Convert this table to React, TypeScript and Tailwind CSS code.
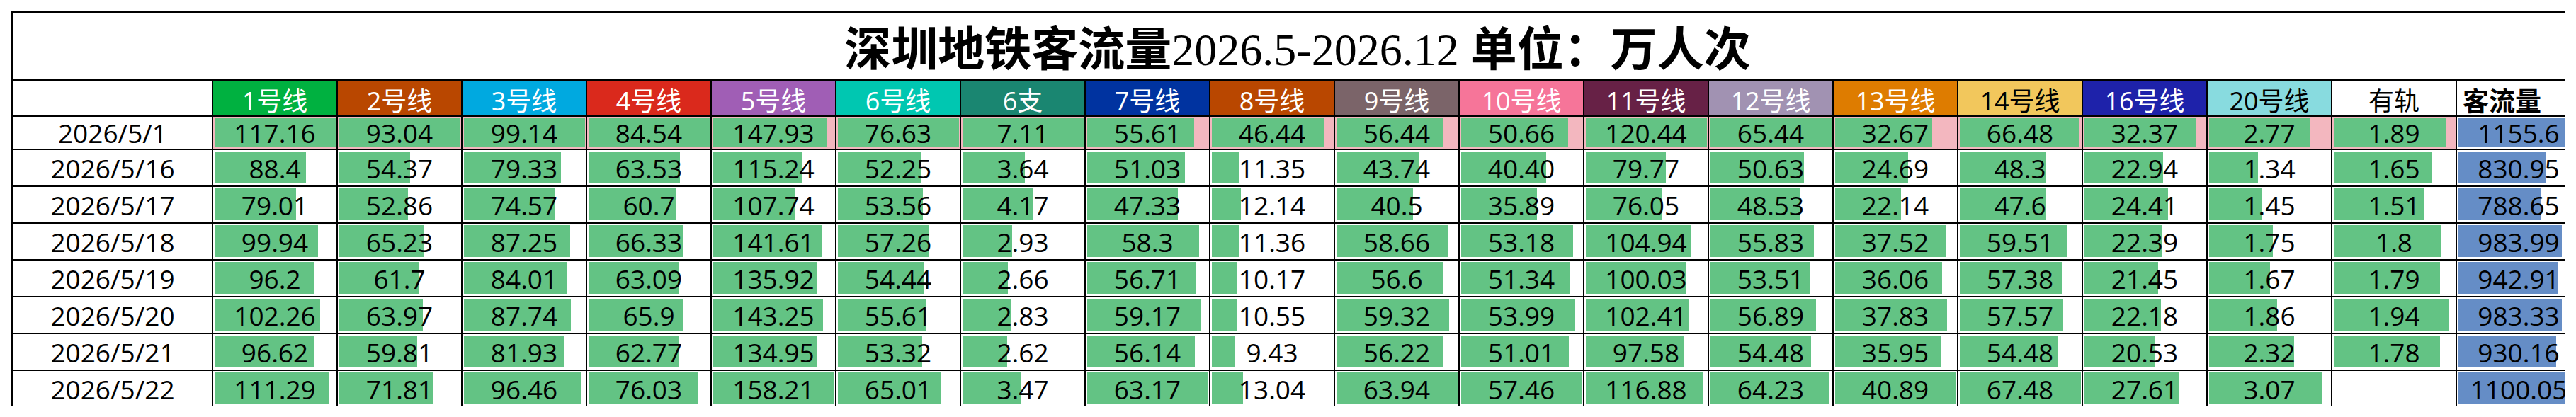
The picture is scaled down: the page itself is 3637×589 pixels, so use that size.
const lines = [
  { name: '1号线', head: 'bg-[#00b140] text-white', max: 117.16 },
  { name: '2号线', head: 'bg-[#b94700] text-white', max: 93.04 },
  { name: '3号线', head: 'bg-[#00a9e0] text-white', max: 99.14 },
  { name: '4号线', head: 'bg-[#da291c] text-white', max: 84.54 },
  { name: '5号线', head: 'bg-[#a05eb5] text-white', max: 158.21 },
  { name: '6号线', head: 'bg-[#00c7b1] text-white', max: 76.63 },
  { name: '6支', head: 'bg-[#1a8671] text-white', max: 7.11 },
  { name: '7号线', head: 'bg-[#0033a0] text-white', max: 63.17 },
  { name: '8号线', head: 'bg-[#b94700] text-white', max: 50.26 },
  { name: '9号线', head: 'bg-[#7b6469] text-white', max: 63.94 },
  { name: '10号线', head: 'bg-[#f67599] text-white', max: 57.46 },
  { name: '11号线', head: 'bg-[#672146] text-white', max: 120.44 },
  { name: '12号线', head: 'bg-[#a192b2] text-white', max: 65.44 },
  { name: '13号线', head: 'bg-[#de7c00] text-white', max: 40.89 },
  { name: '14号线', head: 'bg-[#f2c75c] text-black', max: 67.48 },
  { name: '16号线', head: 'bg-[#1e22aa] text-white', max: 35.26 },
  { name: '20号线', head: 'bg-[#88dbdf] text-black', max: 3.31 },
  { name: '有轨', head: 'bg-white text-black', max: 2.035 },
];

const rows = [
  { date: '2026/5/1', vals: ['117.16', '93.04', '99.14', '84.54', '147.93', '76.63', '7.11', '55.61', '46.44', '56.44', '50.66', '120.44', '65.44', '32.67', '66.48', '32.37', '2.77', '1.89'], total: '1155.6' },
  { date: '2026/5/16', vals: ['88.4', '54.37', '79.33', '63.53', '115.24', '52.25', '3.64', '51.03', '11.35', '43.74', '40.40', '79.77', '50.63', '24.69', '48.3', '22.94', '1.34', '1.65'], total: '830.95' },
  { date: '2026/5/17', vals: ['79.01', '52.86', '74.57', '60.7', '107.74', '53.56', '4.17', '47.33', '12.14', '40.5', '35.89', '76.05', '48.53', '22.14', '47.6', '24.41', '1.45', '1.51'], total: '788.65' },
  { date: '2026/5/18', vals: ['99.94', '65.23', '87.25', '66.33', '141.61', '57.26', '2.93', '58.3', '11.36', '58.66', '53.18', '104.94', '55.83', '37.52', '59.51', '22.39', '1.75', '1.8'], total: '983.99' },
  { date: '2026/5/19', vals: ['96.2', '61.7', '84.01', '63.09', '135.92', '54.44', '2.66', '56.71', '10.17', '56.6', '51.34', '100.03', '53.51', '36.06', '57.38', '21.45', '1.67', '1.79'], total: '942.91' },
  { date: '2026/5/20', vals: ['102.26', '63.97', '87.74', '65.9', '143.25', '55.61', '2.83', '59.17', '10.55', '59.32', '53.99', '102.41', '56.89', '37.83', '57.57', '22.18', '1.86', '1.94'], total: '983.33' },
  { date: '2026/5/21', vals: ['96.62', '59.81', '81.93', '62.77', '134.95', '53.32', '2.62', '56.14', '9.43', '56.22', '51.01', '97.58', '54.48', '35.95', '54.48', '20.53', '2.32', '1.78'], total: '930.16' },
  { date: '2026/5/22', vals: ['111.29', '71.81', '96.46', '76.03', '158.21', '65.01', '3.47', '63.17', '13.04', '63.94', '57.46', '116.88', '64.23', '40.89', '67.48', '27.61', '3.07', ''], total: '1100.05' },
];

const TOTAL_MAX = 1155.6;
const BAR_FULL = 171;

function BarCell({ value, max, pink, blue }: { value: string; max: number; pink: boolean; blue?: boolean }) {
  const w = value ? Math.min(BAR_FULL, (parseFloat(value) / max) * BAR_FULL) : 0;
  return (
    <div className={`grid h-full border-r-2 border-black ${pink ? 'bg-[#f3b7bf]' : 'bg-white'}`}>
      {value && (
        <div
          className={`col-start-1 row-start-1 justify-self-start ml-[2px] mt-[2px] mb-[3px] ${blue ? 'bg-[#658dc6]' : 'bg-[#63c384]'}`}
          style={{ width: w }}
        />
      )}
      <span className="col-start-1 row-start-1 self-center justify-self-center text-[37px] leading-none text-black">
        {value}
      </span>
    </div>
  );
}

export default function App() {
  return (
    <div className="min-h-[589px] bg-white pl-[16px] pt-[15px] font-['Open_Sans','Noto_Sans_CJK_SC',sans-serif]">
      <div className="w-[3606px] h-[558px] overflow-hidden border-l-[3px] border-t-[3px] border-black">
        <div className="w-[3626px]">
          {/* title */}
          <div className="h-[96px] border-b-2 border-black flex items-center justify-center pt-[12px] font-['Liberation_Serif','Noto_Sans_CJK_SC',serif] text-black whitespace-nowrap">
            <span className="text-[66px] font-bold leading-none">深圳地铁客流量</span>
            <span className="text-[64px] leading-none">2026.5-2026.12&nbsp;</span>
            <span className="text-[66px] font-bold leading-none">单位：万人次</span>
          </div>

          {/* header */}
          <div className="grid grid-cols-[282px_repeat(19,176px)] h-[51px] border-b-2 border-black">
            <div className="border-r-2 border-black bg-white" />
            {lines.map((l) => (
              <div
                key={l.name}
                className={`flex items-center justify-center pt-[8px] border-r-2 border-black text-[36px] leading-none ${l.head}`}
              >
                {l.name}
              </div>
            ))}
            <div className="flex items-center pl-[8px] pt-[8px] border-r-2 border-black bg-white text-[37px] leading-none font-bold text-black">
              客流量
            </div>
          </div>

          {/* rows */}
          {rows.map((r, i) => (
            <div
              key={r.date}
              className={`grid grid-cols-[282px_repeat(19,176px)] border-b-2 border-black ${i === 0 ? 'h-[47px]' : 'h-[52px]'}`}
            >
              <div className="flex items-center justify-center border-r-2 border-black bg-white text-[37px] leading-none text-black">
                {r.date}
              </div>
              {r.vals.map((v, j) => (
                <BarCell key={j} value={v} max={lines[j].max} pink={i === 0} />
              ))}
              <BarCell value={r.total} max={TOTAL_MAX} pink={false} blue />
            </div>
          ))}
        </div>
      </div>
    </div>
  );
}
